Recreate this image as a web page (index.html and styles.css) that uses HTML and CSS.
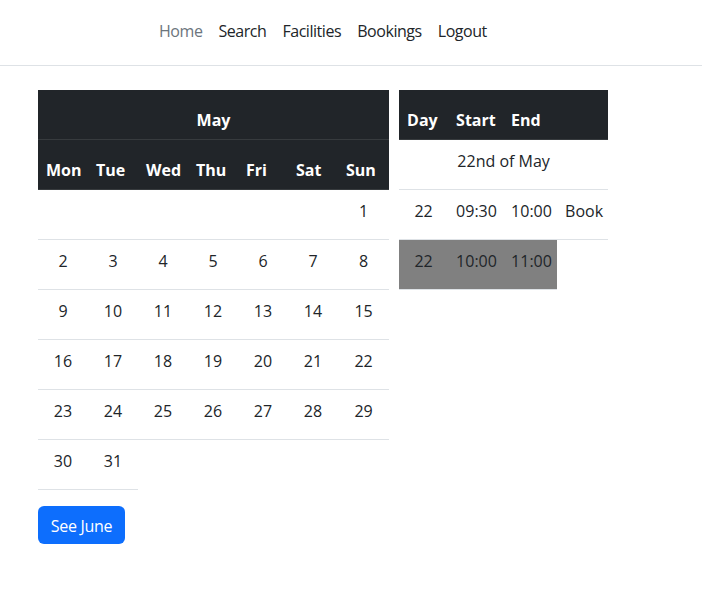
FILE: index.html
```html
<!DOCTYPE html>
<html lang="en">
<head>
<meta charset="utf-8">
<title>Calendar</title>
<link rel="stylesheet" href="styles.css">
</head>
<body>
<header class="navbar">
  <ul class="nav">
    <li><a class="nav-link active" href="#">Home</a></li>
    <li><a class="nav-link" href="#">Search</a></li>
    <li><a class="nav-link" href="#">Facilities</a></li>
    <li><a class="nav-link" href="#">Bookings</a></li>
    <li><a class="nav-link" href="#">Logout</a></li>
  </ul>
</header>
<main class="main">
  <div class="tables">
    <div class="cal-wrap">
      <table class="table cal">
        <colgroup>
          <col class="c50"><col class="c50"><col class="c50"><col class="c50"><col class="c50"><col class="c50"><col class="c51">
        </colgroup>
        <thead class="dark">
          <tr><th colspan="7" class="month">May</th></tr>
          <tr><th>Mon</th><th>Tue</th><th>Wed</th><th>Thu</th><th>Fri</th><th>Sat</th><th>Sun</th></tr>
        </thead>
        <tbody>
          <tr><td></td><td></td><td></td><td></td><td></td><td></td><td>1</td></tr>
          <tr><td>2</td><td>3</td><td>4</td><td>5</td><td>6</td><td>7</td><td>8</td></tr>
          <tr><td>9</td><td>10</td><td>11</td><td>12</td><td>13</td><td>14</td><td>15</td></tr>
          <tr><td>16</td><td>17</td><td>18</td><td>19</td><td>20</td><td>21</td><td>22</td></tr>
          <tr><td>23</td><td>24</td><td>25</td><td>26</td><td>27</td><td>28</td><td>29</td></tr>
          <tr><td>30</td><td>31</td></tr>
        </tbody>
      </table>
      <button class="btn" type="button">See June</button>
    </div>
    <table class="table slots">
      <colgroup>
        <col class="s1"><col class="s2"><col class="s3"><col class="s4">
      </colgroup>
      <thead class="dark">
        <tr><th>Day</th><th>Start</th><th>End</th><th></th></tr>
      </thead>
      <tbody>
        <tr><td colspan="4">22nd of May</td></tr>
        <tr><td>22</td><td>09:30</td><td>10:00</td><td>Book</td></tr>
        <tr class="taken"><td>22</td><td>10:00</td><td>11:00</td></tr>
      </tbody>
    </table>
  </div>
</main>
</body>
</html>
```
FILE: styles.css
```css
* { box-sizing: border-box; }
body {
  margin: 0;
  font-family: "Open Sans", "Noto Sans", sans-serif;
  font-size: 16px;
  line-height: 24px;
  color: #212529;
  background: #fff;
}
.navbar {
  height: 66px;
  border-bottom: 1px solid #dee2e6;
  padding-top: 19px;
}
.nav {
  list-style: none;
  margin: 0;
  padding: 0 0 0 151px;
  display: flex;
}
.nav-link {
  display: block;
  padding: 0 8px;
  color: #212529;
  text-decoration: none;
  letter-spacing: -0.45px;
}
.nav-link.active { color: #6c757d; }
.main {
  padding: 24px 0 0 38px;
}
.tables {
  display: flex;
  align-items: flex-start;
  gap: 10px;
}
.table {
  border-collapse: separate;
  border-spacing: 0;
  table-layout: fixed;
  margin-bottom: 16px;
}
.table tr { height: 50px; }
.table th, .table td {
  padding: 9px 8px 7px;
  border-bottom: 1px solid #dee2e6;
  text-align: center;
  vertical-align: top;
  white-space: nowrap;
  overflow: visible;
}
.table th {
  text-align: left;
  vertical-align: bottom;
  font-weight: 700;
}
.dark th {
  background: #212529;
  color: #fff;
  border-bottom-color: #373b3e;
}
.dark th.month { text-align: center; }
.cal { width: 351px; }
.c50 { width: 50px; }
.c51 { width: 51px; }
.slots { width: 209px; }
.s1 { width: 49px; }
.s2 { width: 55px; }
.s3 { width: 54px; }
.s4 { width: 51px; }
.taken td { background: #808080; }
.btn {
  display: block;
  font-family: inherit;
  font-size: 16px;
  line-height: 24px;
  padding: 8px 12px 6px;
  height: 38px;
  width: 87px;
  border: 0;
  border-radius: 6px;
  background: #0d6efd;
  color: #fff;
  letter-spacing: -0.3px;
}
```
